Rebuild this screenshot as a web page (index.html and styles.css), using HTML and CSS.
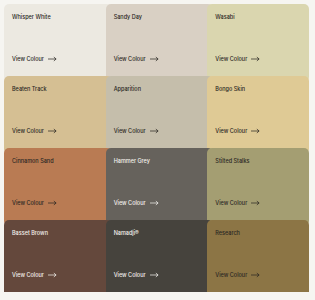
FILE: index.html
```html
<!doctype html>
<html lang="en">
<head>
<meta charset="utf-8">
<title>Colours</title>
<meta name="viewport" content="width=device-width,initial-scale=1">
<link rel="stylesheet" href="styles.css">
</head>
<body>

<div class="swatches">
  <a class="swatch whisper-white"><span class="name">Whisper White</span><span class="view">View Colour <svg viewBox="0 0 10 6"><path d="M0 3h9M6.5 .8L9 3 6.5 5.2"/></svg></span></a>
  <a class="swatch sandy-day"><span class="name">Sandy Day</span><span class="view">View Colour <svg viewBox="0 0 10 6"><path d="M0 3h9M6.5 .8L9 3 6.5 5.2"/></svg></span></a>
  <a class="swatch wasabi"><span class="name">Wasabi</span><span class="view">View Colour <svg viewBox="0 0 10 6"><path d="M0 3h9M6.5 .8L9 3 6.5 5.2"/></svg></span></a>

  <a class="swatch beaten-track"><span class="name">Beaten Track</span><span class="view">View Colour <svg viewBox="0 0 10 6"><path d="M0 3h9M6.5 .8L9 3 6.5 5.2"/></svg></span></a>
  <a class="swatch apparition"><span class="name">Apparition</span><span class="view">View Colour <svg viewBox="0 0 10 6"><path d="M0 3h9M6.5 .8L9 3 6.5 5.2"/></svg></span></a>
  <a class="swatch bongo-skin"><span class="name">Bongo Skin</span><span class="view">View Colour <svg viewBox="0 0 10 6"><path d="M0 3h9M6.5 .8L9 3 6.5 5.2"/></svg></span></a>

  <a class="swatch cinnamon-sand"><span class="name">Cinnamon Sand</span><span class="view">View Colour <svg viewBox="0 0 10 6"><path d="M0 3h9M6.5 .8L9 3 6.5 5.2"/></svg></span></a>
  <a class="swatch hammer-grey dark"><span class="name">Hammer Grey</span><span class="view">View Colour <svg viewBox="0 0 10 6"><path d="M0 3h9M6.5 .8L9 3 6.5 5.2"/></svg></span></a>
  <a class="swatch stilted-stalks"><span class="name">Stilted Stalks</span><span class="view">View Colour <svg viewBox="0 0 10 6"><path d="M0 3h9M6.5 .8L9 3 6.5 5.2"/></svg></span></a>

  <a class="swatch basset-brown dark"><span class="name">Basset Brown</span><span class="view">View Colour <svg viewBox="0 0 10 6"><path d="M0 3h9M6.5 .8L9 3 6.5 5.2"/></svg></span></a>
  <a class="swatch namadji dark"><span class="name">Namadji®</span><span class="view">View Colour <svg viewBox="0 0 10 6"><path d="M0 3h9M6.5 .8L9 3 6.5 5.2"/></svg></span></a>
  <a class="swatch research"><span class="name">Research</span><span class="view">View Colour <svg viewBox="0 0 10 6"><path d="M0 3h9M6.5 .8L9 3 6.5 5.2"/></svg></span></a>
</div>

</body>
</html>
```

FILE: styles.css
```css
*{box-sizing:border-box;margin:0;padding:0}
html,body{
  font-family:Inter,"Noto Sans",Arial,sans-serif;
  background:#f6f5f1;
  color:#2a2723;
  overflow:hidden;
}
body{padding:4px 6px 0 4px}

/* grid of overlapping colour cards */
.swatches{
  display:grid;
  grid-template-columns:repeat(3,1fr);
  grid-auto-rows:72px;
}
.swatch{
  display:flex;
  flex-direction:column;
  justify-content:space-between;
  margin:0 -6px -6px 0;     /* each card slides under the next one */
  padding:9px 8px 19px;
  border-radius:5px;
  font-size:5.5px;
  line-height:8px;
  font-weight:500;
  color:#2a2723;
  text-decoration:none;
}
.swatch:nth-child(3n){margin-right:0}
.swatch.dark{color:#f4f2ee}

.view{display:flex;align-items:center;gap:4px}
.view svg{
  width:9px;height:6px;
  fill:none;
  stroke:currentColor;
  stroke-width:.8;
}

/* colours */
.whisper-white {background:#ece9e1}
.sandy-day     {background:#d9d0c4}
.wasabi        {background:#dad6af}
.beaten-track  {background:#d5bf93}
.apparition    {background:#c5beab}
.bongo-skin    {background:#dfca95}
.cinnamon-sand {background:#b97b53}
.hammer-grey   {background:#66625c}
.stilted-stalks{background:#a49e72}
.basset-brown  {background:#64483c}
.namadji       {background:#46433d}
.research      {background:#8c7545}
```
